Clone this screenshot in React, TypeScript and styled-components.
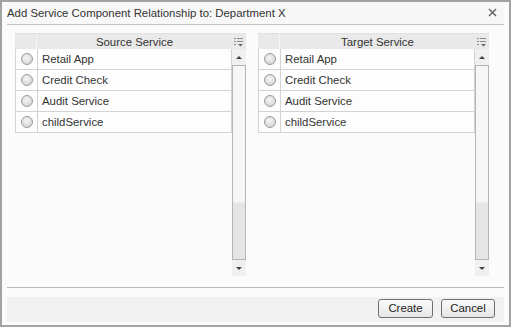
import React, { FC } from "react";
import styled, { createGlobalStyle } from "styled-components";

const GlobalStyle = createGlobalStyle`
  html, body {
    margin: 0;
    padding: 0;
    background: #ffffff;
  }
  * {
    box-sizing: border-box;
  }
`;

const Dialog = styled.div`
  width: 511px;
  height: 327px;
  border: 2px solid #a3a3a3;
  background: #fbfbfb;
  font-family: "Liberation Sans", Arial, sans-serif;
  font-size: 11px;
  color: #333333;
  display: flex;
  flex-direction: column;
  padding: 0 5px;
`;

const TitleBar = styled.div`
  height: 23px;
  display: flex;
  align-items: center;
  justify-content: space-between;
  border-bottom: 1px solid #c4c4c4;
  background: #f7f7f7;
  padding-bottom: 1px;
`;

const Title = styled.div`
  font-size: 11.4px;
  color: #333333;
`;

const CloseIcon = styled.svg`
  margin-right: 7px;
  display: block;
`;

const Content = styled.div`
  display: flex;
  gap: 12px;
  padding-left: 8px;
  margin-top: 8px;
  height: 243px;
`;

const GridPanel = styled.div`
  width: 231px;
  display: flex;
  flex-direction: column;
`;

const Header = styled.div`
  height: 16px;
  display: flex;
  background: #e9e9e9;
  border-top: 1px dotted #d8d8d8;
`;

const HeaderCheckCell = styled.div`
  width: 22px;
  border-right: 1px solid #f6f6f6;
`;

const HeaderTitle = styled.div`
  flex: 1;
  display: flex;
  align-items: center;
  justify-content: center;
  font-size: 11.4px;
  color: #333333;
`;

const HeaderMenu = styled.div`
  width: 14px;
  display: flex;
  align-items: center;
  justify-content: center;
`;

const GridBody = styled.div`
  flex: 1;
  display: flex;
`;

const Rows = styled.div`
  flex: 1;
  display: flex;
  flex-direction: column;
`;

const Row = styled.div`
  height: 21px;
  display: flex;
  border: 1px solid #d3d3d3;
  border-top: none;
  background: #fdfdfd;
`;

const RadioCell = styled.div`
  width: 22px;
  border-right: 1px solid #d3d3d3;
  display: flex;
  align-items: center;
  justify-content: center;
`;

const Radio = styled.span`
  width: 12px;
  height: 12px;
  border-radius: 50%;
  border: 1px solid #9c9c9c;
  background: radial-gradient(circle at 45% 40%, #f7f7f7 0%, #dcdcdc 60%, #c4c4c4 100%);
`;

const NameCell = styled.div`
  flex: 1;
  display: flex;
  align-items: center;
  padding-left: 4px;
  font-size: 11.4px;
  color: #333333;
`;

const ScrollBar = styled.div`
  width: 14px;
  display: flex;
  flex-direction: column;
`;

const ScrollButton = styled.div`
  height: 16px;
  display: flex;
  align-items: center;
  justify-content: center;
  background: #f0f0f0;
`;

const Arrow = styled.span<{ $down?: boolean }>`
  width: 0;
  height: 0;
  border-left: 3px solid transparent;
  border-right: 3px solid transparent;
  ${({ $down }) =>
    $down ? "border-top: 3px solid #444;" : "border-bottom: 3px solid #444;"}
`;

const Track = styled.div`
  flex: 1;
  border: 1px solid #b4b4bc;
  display: flex;
  flex-direction: column;
  background: #f6f6f6;
`;

const Thumb = styled.div`
  height: 57px;
  margin-top: auto;
  background: #e5e5e5;
  border-top: 1px solid #ececec;
`;

const Separator = styled.div`
  margin-top: 11px;
  height: 1px;
  background: #b8b8b8;
`;

const Footer = styled.div`
  margin-top: 9px;
  height: 25px;
  display: flex;
  align-items: center;
  justify-content: flex-end;
  gap: 8px;
  padding-right: 9px;
  padding-bottom: 3px;
  background: #f1f1f1;
`;

const Button = styled.button<{ $width: number }>`
  width: ${({ $width }) => $width}px;
  height: 19px;
  padding: 0;
  border: 1px solid #707070;
  border-radius: 3px;
  background: linear-gradient(#fbfbfb, #e6e6e6);
  font-family: "Liberation Sans", Arial, sans-serif;
  font-size: 11.4px;
  color: #222222;
`;

const services = ["Retail App", "Credit Check", "Audit Service", "childService"];

const MenuIcon: FC = () => (
  <svg width="10" height="10" viewBox="0 0 10 10">
    <rect x="0" y="1" width="2" height="1" fill="#8a8a8a" />
    <rect x="3" y="1" width="6" height="1" fill="#8a8a8a" />
    <rect x="0" y="4" width="2" height="1" fill="#8a8a8a" />
    <rect x="3" y="4" width="6" height="1" fill="#8a8a8a" />
    <rect x="0" y="7" width="2" height="1" fill="#8a8a8a" />
    <path d="M4 7 L9 7 L6.5 9.5 Z" fill="#666" />
  </svg>
);

const ServiceGrid: FC<{ title: string }> = ({ title }) => (
  <GridPanel>
    <Header>
      <HeaderCheckCell />
      <HeaderTitle>{title}</HeaderTitle>
      <HeaderMenu>
        <MenuIcon />
      </HeaderMenu>
    </Header>
    <GridBody>
      <Rows>
        {services.map((name) => (
          <Row key={name}>
            <RadioCell>
              <Radio />
            </RadioCell>
            <NameCell>{name}</NameCell>
          </Row>
        ))}
      </Rows>
      <ScrollBar>
        <ScrollButton>
          <Arrow />
        </ScrollButton>
        <Track>
          <Thumb />
        </Track>
        <ScrollButton>
          <Arrow $down />
        </ScrollButton>
      </ScrollBar>
    </GridBody>
  </GridPanel>
);

const App: FC = () => (
  <>
    <GlobalStyle />
    <Dialog>
      <TitleBar>
        <Title>Add Service Component Relationship to: Department X</Title>
        <CloseIcon width="9" height="9" viewBox="0 0 9 9">
          <path d="M1 1 L8 8 M8 1 L1 8" stroke="#666" strokeWidth="1.5" />
        </CloseIcon>
      </TitleBar>
      <Content>
        <ServiceGrid title="Source Service" />
        <ServiceGrid title="Target Service" />
      </Content>
      <Separator />
      <Footer>
        <Button $width={55}>Create</Button>
        <Button $width={54}>Cancel</Button>
      </Footer>
    </Dialog>
  </>
);

export default App;
